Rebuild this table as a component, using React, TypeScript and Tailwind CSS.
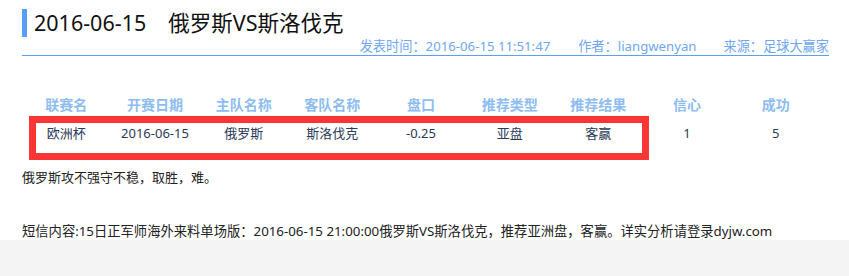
import React from "react";

const headers = ["联赛名", "开赛日期", "主队名称", "客队名称", "盘口", "推荐类型", "推荐结果", "信心", "成功"];
const row = ["欧洲杯", "2016-06-15", "俄罗斯", "斯洛伐克", "-0.25", "亚盘", "客赢", "1", "5"];

export default function App() {
  return (
    <div
      className="w-[849px] h-[276px] bg-[#f4f4f4] overflow-hidden"
      style={{ fontFamily: '"Noto Sans", "Noto Sans CJK SC", sans-serif' }}
    >
      <div className="relative h-[240px] bg-white pl-[22px] pr-[20px] overflow-hidden">
        <div className="pt-[9px] flex items-center">
          <div className="w-[5px] h-[28px] bg-[#55a0f5]" />
          <div className="ml-[7px] text-[21.5px] leading-[28px] text-[#111]">
            <span>2016-06-15</span>
            <span className="ml-[22px]">俄罗斯VS斯洛伐克</span>
          </div>
        </div>
        <div className="h-[18px] flex justify-end items-center text-[13.2px] text-[#6ea7ee] leading-[18px]">
          <span>发表时间：2016-06-15 11:51:47</span>
          <span className="ml-[28px]">作者：liangwenyan</span>
          <span className="ml-[27px]">来源：足球大赢家</span>
        </div>
        <div className="h-px bg-[#5d9ff0]" />
        <div className="mt-[38px] w-[798px] grid grid-cols-9">
          {headers.map((h) => (
            <div key={h} className="h-[20px] flex items-center justify-center text-[14px] font-bold text-[#8dbdf0]">
              {h}
            </div>
          ))}
          {row.map((c, i) => (
            <div key={i} className="h-[40px] flex items-center justify-center text-[13px] text-[#2a3a57]">
              {c}
            </div>
          ))}
        </div>
        <div className="mt-[14px] h-[20px] flex items-center text-[13px] text-[#222]">
          俄罗斯攻不强守不稳，取胜，难。
        </div>
        <div className="mt-[36px] h-[16px] flex items-center text-[13.3px] text-[#222] whitespace-nowrap">
          短信内容:15日正军师海外来料单场版：2016-06-15 21:00:00俄罗斯VS斯洛伐克，推荐亚洲盘，客赢。详实分析请登录dyjw.com
        </div>
        <div className="absolute left-[29px] top-[116px] w-[620px] h-[44px] border-[7px] border-[#f93535]" />
      </div>
    </div>
  );
}
